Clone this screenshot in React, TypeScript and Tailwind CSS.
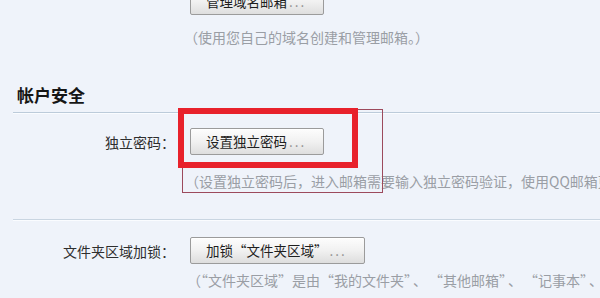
import React from "react";

function Btn({ children, className = "" }: { children: React.ReactNode; className?: string }) {
  return (
    <div
      className={`flex h-[27px] items-center rounded-[2px] border border-[#9b9b9b] bg-gradient-to-b from-[#fdfdfd] via-[#f1f1f1] to-[#dedede] pl-[15px] text-[13.5px] leading-none text-[#1e1e1e] shadow-[inset_0_1px_0_#ffffff] ${className}`}
    >
      <span className="whitespace-nowrap">{children}</span>
      <span className="ml-[2px] tracking-[2px] text-[#8c8c8c]">...</span>
    </div>
  );
}

function Sep() {
  return <span className="ml-[2px] mr-[9px]">、</span>;
}

export default function App() {
  return (
    <div className="relative h-[298px] w-[600px] overflow-hidden bg-[#eff3fa] font-['Noto_Sans_CJK_SC','Noto_Sans_CJK_JP',sans-serif]">
      {/* top section */}
      <div className="pl-[190px]">
        <Btn className="mt-[-12px] w-[134px]">管理域名邮箱</Btn>
        <p className="ml-[-6px] mt-[14px] whitespace-nowrap text-[14px] leading-[16px] text-[#9a9ea5]">
          （使用您自己的域名创建和管理邮箱。）
        </p>
      </div>

      {/* heading */}
      <h2 className="ml-[17px] mt-[40px] text-[17px] font-bold leading-[20px] text-[#161616]">帐户安全</h2>
      <div className="ml-[13px] mt-[7px] h-[2px] border-b border-t border-b-[#fafcff] border-t-[#bccbda]" />

      {/* row 1 */}
      <div className="mt-[14px] flex items-center">
        <div className="w-[175px] text-right text-[14px] leading-[16px] text-[#2e2e2e]">独立密码：</div>
        <Btn className="ml-[15px] w-[134px]">设置独立密码</Btn>
      </div>
      <p className="ml-[185px] mt-[18px] whitespace-nowrap text-[14px] leading-[16px] text-[#9a9ea5]">
        （设置独立密码后，进入邮箱需要输入独立密码验证，使用QQ邮箱更安全。）
      </p>

      <div className="ml-[13px] mt-[30px] h-[2px] border-b border-t border-b-[#fafcff] border-t-[#c9d5e1]" />

      {/* row 2 */}
      <div className="mt-[16px] flex items-center">
        <div className="w-[175px] text-right text-[14px] leading-[16px] text-[#2e2e2e]">文件夹区域加锁：</div>
        <Btn className="ml-[15px] w-[175px]">加锁“文件夹区域”</Btn>
      </div>
      <p className="ml-[187px] mt-[8px] whitespace-nowrap text-[14px] leading-[16px] text-[#9a9ea5]">
        （“文件夹区域”是由“我的文件夹”
        <Sep />
        “其他邮箱”
        <Sep />
        “记事本”
        <Sep />
        “日历”等组成。）
      </p>

      {/* annotation boxes */}
      <div className="pointer-events-none absolute left-[182px] top-[109px] h-[84px] w-[201px] border-[1.5px] border-[#9c4a5c]" />
      <div className="pointer-events-none absolute left-[178px] top-[108px] h-[60px] w-[180px] border-[6px] border-[#e8212b]" />
    </div>
  );
}
